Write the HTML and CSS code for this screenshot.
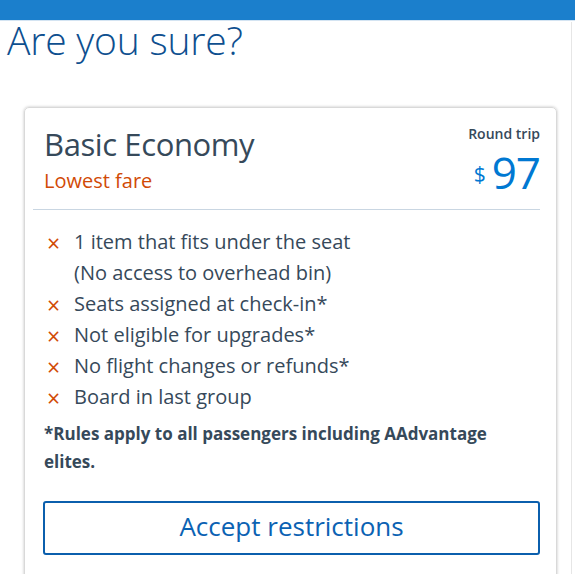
FILE: index.html
```html
<!DOCTYPE html>
<html>
<head>
<meta charset="utf-8">
<link rel="stylesheet" href="styles.css">
</head>
<body>
<div class="topbar"></div>
<div class="page">
  <h1 class="title">Are you sure?</h1>
  <div class="card">
    <div class="card-head">
      <div class="fare">
        <div class="fare-name">Basic Economy</div>
        <div class="fare-tag">Lowest fare</div>
      </div>
      <div class="price-box">
        <div class="trip">Round trip</div>
        <div class="price"><span class="cur">$</span><span class="amt">97</span></div>
      </div>
    </div>
    <div class="divider"></div>
    <ul class="rules">
      <li><span class="x">×</span><span class="txt">1 item that fits under the seat<br>(No access to overhead bin)</span></li>
      <li><span class="x">×</span><span class="txt">Seats assigned at check-in*</span></li>
      <li><span class="x">×</span><span class="txt">Not eligible for upgrades*</span></li>
      <li><span class="x">×</span><span class="txt">No flight changes or refunds*</span></li>
      <li><span class="x">×</span><span class="txt">Board in last group</span></li>
    </ul>
    <p class="note">*Rules apply to all passengers including AAdvantage elites.</p>
    <button class="accept">Accept restrictions</button>
  </div>
</div>
</body>
</html>
```

FILE: styles.css
```css
html, body {
  margin: 0;
  padding: 0;
  background: #ffffff;
  overflow: hidden;
}
body {
  font-family: "Open Sans", "Noto Sans", sans-serif;
  color: #36495a;
}
.topbar {
  height: 20px;
  background: #1b7fcc;
  border-bottom: 1px solid #d4e4f2;
}
.page {
  width: 572px;
  height: 560px;
  border-right: 1px solid #e6e6e6;
  box-sizing: border-box;
}
.title {
  margin: 1px 0 0 0;
  padding-left: 7px;
  font-size: 39px;
  font-weight: 300;
  line-height: 36px;
  color: #0e4f8f;
  letter-spacing: -0.2px;
}
.card {
  margin: 49px 0 0 24px;
  width: 533px;
  height: 480px;
  box-sizing: border-box;
  border: 1px solid #d9d9d9;
  border-radius: 5px;
  box-shadow: 0 0 3px rgba(0, 0, 0, 0.25);
  padding: 0 16px 0 7px;
}
.card-head {
  display: flex;
  justify-content: space-between;
  padding: 16px 0 0 12px;
  height: 101px;
  box-sizing: border-box;
}
.fare-name {
  font-size: 31px;
  line-height: 40px;
  letter-spacing: -0.4px;
  color: #36495a;
}
.fare-tag {
  font-size: 20px;
  line-height: 28px;
  margin-top: 3px;
  color: #d14a06;
}
.price-box {
  text-align: right;
}
.trip {
  font-size: 14px;
  font-weight: 600;
  line-height: 20px;
  margin-top: 0;
}
.price {
  color: #0078d2;
  line-height: 40px;
  margin-top: 8px;
}
.cur {
  font-size: 21px;
  line-height: 1;
  margin-right: 6px;
  vertical-align: 7px;
}
.amt {
  font-size: 44px;
  line-height: 40px;
  font-weight: 400;
  letter-spacing: -1px;
}
.divider {
  height: 1px;
  background: #c9d6e2;
  margin-left: 1px;
}
.rules {
  list-style: none;
  margin: 16px 0 0 0;
  padding: 0 0 0 15px;
}
.rules li {
  display: flex;
  font-size: 20px;
  line-height: 31px;
}
.x {
  width: 27px;
  flex: none;
  color: #d14a06;
  font-size: 23px;
  line-height: 31px;
  position: relative;
  top: 2px;
}
.txt {
  color: #36495a;
}
.note {
  margin: 8px 0 0 12px;
  font-size: 17px;
  font-weight: 700;
  line-height: 28px;
  color: #36495a;
}
.accept {
  display: block;
  margin: 25px 0 0 11px;
  width: 497px;
  height: 54px;
  background: #ffffff;
  border: 2px solid #0b5fad;
  border-radius: 3px;
  font-family: "Open Sans", "Noto Sans", sans-serif;
  font-size: 26px;
  color: #0b62b3;
  padding: 0 0 4px 0;
}
```
